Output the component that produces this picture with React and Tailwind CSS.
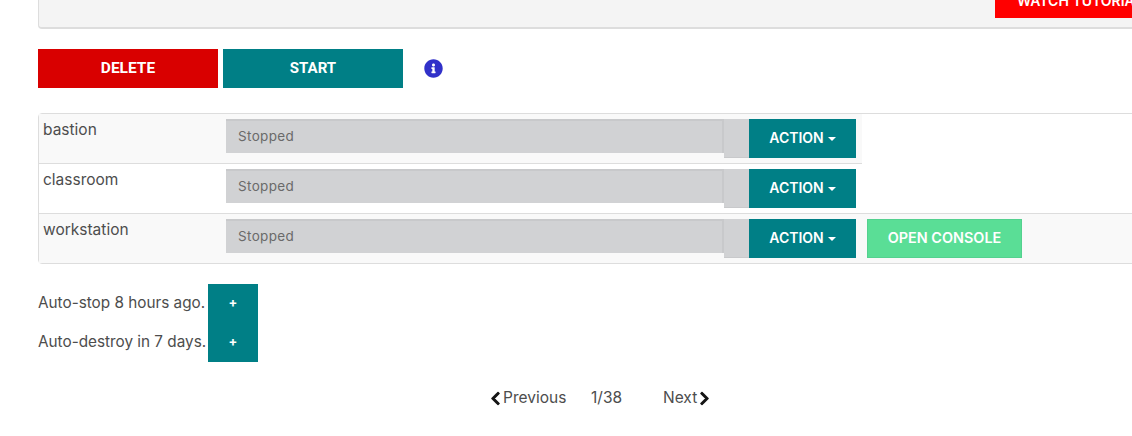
import { FaChevronLeft, FaChevronRight } from 'react-icons/fa';

const vms = [
  { name: 'bastion', bg: 'bg-[#f9f9f9]', border: 'border-b border-[#dddddd]', size: 'h-[50px] w-[823px]' },
  { name: 'classroom', bg: 'bg-white', border: 'border-b border-[#dddddd]', size: 'h-[50px] w-full' },
  { name: 'workstation', bg: 'bg-[#f9f9f9]', border: '', size: 'h-[49px] w-full' },
];

const timers = ['Auto-stop 8 hours ago.', 'Auto-destroy in 7 days.'];

const InfoIcon = () => (
  <svg viewBox="0 0 512 512" className="block h-[19px] w-[19px]" fill="#3131c9">
    <path d="M256 8C119 8 8 119 8 256s111 248 248 248 248-111 248-248S393 8 256 8zm0 110c23 0 42 19 42 42s-19 42-42 42-42-19-42-42 19-42 42-42zm56 254c0 7-5 12-12 12h-88c-7 0-12-5-12-12v-24c0-7 5-12 12-12h12v-64h-12c-7 0-12-5-12-12v-24c0-7 5-12 12-12h64c7 0 12 5 12 12v100h12c7 0 12 5 12 12v24z" />
  </svg>
);

const VmRow = ({ vm }) => (
  <div className={`flex ${vm.size} ${vm.bg} ${vm.border}`}>
    <div className="w-[187px] pl-[4px] pt-[5px] text-[15.5px] leading-[22px] text-[#4d4d4d]">{vm.name}</div>
    <div className="flex items-start pt-[5px]">
      <div className="flex h-[34px] w-[498px] items-center border-t-2 border-r-2 border-[#c8c9cb] bg-[#d1d2d4] pb-[2px] pl-[12px] text-[13.5px] tracking-[0.35px] text-[#6a6a6a]">
        Stopped
      </div>
      <div className="h-[39px] w-[25px] border-b border-[#c8c9cb] bg-[#d1d2d4]" />
      <button className="flex h-[39px] w-[107px] items-center justify-center gap-[4px] bg-[#007f86] pb-[2px] text-[14px] font-semibold text-white">
        ACTION
        <span className="mt-[2px] border-x-[4px] border-t-[4px] border-x-transparent border-t-white" />
      </button>
      {vm.name === 'workstation' && (
        <button className="ml-[11px] h-[39px] w-[155px] border border-[#54d18f] bg-[#5ade96] pb-[1px] text-[14.4px] font-semibold text-white">
          OPEN CONSOLE
        </button>
      )}
    </div>
  </div>
);

const App = () => {
  return (
    <div className="h-[436px] w-[1132px] overflow-hidden bg-white [font-family:Inter,sans-serif] text-[#4d4d4d]">
      <div className="ml-[38px] flex h-[29px] w-[1120px] justify-end rounded-b border-b-2 border-l border-[#dddddd] bg-[#f4f4f4]">
        <div className="mr-[25px] flex h-[18px] w-[138px] items-end overflow-hidden bg-[#ff0000] pl-[22px]">
          <span className="-translate-y-px whitespace-nowrap pb-[8px] text-[14px] font-semibold leading-[16px] text-white">WATCH TUTORIAL</span>
        </div>
      </div>

      <div className="ml-[38px] mt-[20px] flex items-center">
        <button className="h-[39px] w-[180px] bg-[#d90000] [font-family:Roboto,sans-serif] text-[15.5px] font-bold text-white">DELETE</button>
        <button className="ml-[5px] h-[39px] w-[180px] bg-[#007f86] [font-family:Roboto,sans-serif] text-[15px] font-bold text-white">START</button>
        <span className="ml-[21px] pb-[1px]"><InfoIcon /></span>
      </div>

      <div className="ml-[38px] mt-[25px] w-[1120px] rounded border border-[#dddddd]">
        {vms.map((vm) => (
          <VmRow key={vm.name} vm={vm} />
        ))}
      </div>

      <div className="ml-[38px] mt-[20px]">
        {timers.map((text) => (
          <div key={text} className="flex items-center">
            <span className="w-[170px] whitespace-nowrap pb-[1px] text-[15.3px]">{text}</span>
            <button className="h-[39px] w-[50px] bg-[#007f86] pb-[2px] text-[13px] font-bold text-white">+</button>
          </div>
        ))}
      </div>

      <div className="mt-[24px] flex h-[24px] items-center pl-[490px] text-[15.5px]">
        <FaChevronLeft className="mr-[2px] h-[15px] w-[11px] stroke-[30px] text-[#151515]" />
        <span className="w-[88px]">Previous</span>
        <span className="w-[72px]">1/38</span>
        <span>Next</span>
        <FaChevronRight className="ml-[2px] h-[15px] w-[11px] stroke-[30px] text-[#151515]" />
      </div>
    </div>
  );
};

export default App;
